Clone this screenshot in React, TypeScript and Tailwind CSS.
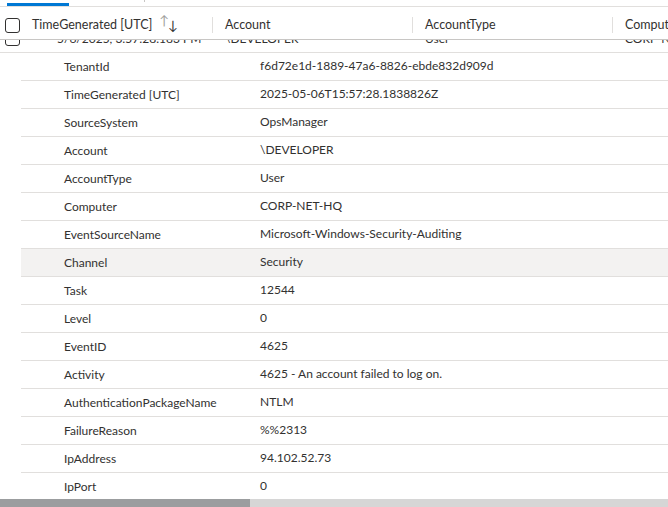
const details: [string, string][] = [
  ["TenantId", "f6d72e1d-1889-47a6-8826-ebde832d909d"],
  ["TimeGenerated [UTC]", "2025-05-06T15:57:28.1838826Z"],
  ["SourceSystem", "OpsManager"],
  ["Account", "\\DEVELOPER"],
  ["AccountType", "User"],
  ["Computer", "CORP-NET-HQ"],
  ["EventSourceName", "Microsoft-Windows-Security-Auditing"],
  ["Channel", "Security"],
  ["Task", "12544"],
  ["Level", "0"],
  ["EventID", "4625"],
  ["Activity", "4625 - An account failed to log on."],
  ["AuthenticationPackageName", "NTLM"],
  ["FailureReason", "%%2313"],
  ["IpAddress", "94.102.52.73"],
  ["IpPort", "0"],
];

function Checkbox() {
  return <div className="w-[15px] h-[15px] rounded-[3px] border border-[#323130] bg-white" />;
}

export default function App() {
  return (
    <div
      className="w-[668px] h-[507px] overflow-hidden bg-white text-[#323130] text-[12px] flex flex-col"
      style={{ fontFamily: 'Lato, "Open Sans", sans-serif' }}
    >
      {/* tab strip */}
      <div className="h-[7px] shrink-0 relative border-b border-[#e1dfdd]">
        <div className="absolute left-[7px] top-[3px] w-[62px] h-[3px] bg-[#0078d4]" />
        <div className="absolute left-[144px] top-0 w-px h-[2px] bg-[#c8c6c4]" />
      </div>

      <div className="flex-1 min-h-0 overflow-hidden flex flex-col">
        {/* header */}
        <div className="relative z-10 h-[33px] shrink-0 flex items-center pt-[4px] bg-white border-b border-[#c8c6c4] whitespace-nowrap text-[12.5px]">
          <div className="w-[25px] shrink-0 pl-[5px] flex items-center">
            <Checkbox />
          </div>
          <div className="w-[187px] shrink-0 pl-[7px] flex items-center">
            <span>TimeGenerated [UTC]</span>
            <span className="ml-[7px] flex items-start text-[13px] leading-none">
              <span className="text-[#a19f9d] -mt-[4px]">↑</span>
              <span className="text-[#323130] mt-[1px] -ml-[1px]">↓</span>
            </span>
          </div>
          <div className="w-px h-[16px] shrink-0 bg-[#e1dfdd]" />
          <div className="w-[199px] shrink-0 pl-[12px]">Account</div>
          <div className="w-px h-[16px] shrink-0 bg-[#e1dfdd]" />
          <div className="w-[199px] shrink-0 pl-[12px]">AccountType</div>
          <div className="w-px h-[16px] shrink-0 bg-[#e1dfdd]" />
          <div className="w-[120px] shrink-0 pl-[12px]">Computer</div>
        </div>

        {/* scrolled rows */}
        <div className="-mt-[15px] flex flex-col">
          <div className="h-[28px] shrink-0 flex items-center border-b border-[#e1dfdd] whitespace-nowrap">
            <div className="w-[25px] shrink-0 pl-[5px]">
              <Checkbox />
            </div>
            <div className="w-[188px] shrink-0 pl-[32px]">5/6/2025, 3:57:28.183 PM</div>
            <div className="w-[200px] shrink-0 pl-[12px]">\DEVELOPER</div>
            <div className="w-[200px] shrink-0 pl-[12px]">User</div>
            <div className="w-[120px] shrink-0 pl-[12px]">CORP-NET-HQ</div>
          </div>
          <div className="pl-[21px] flex flex-col">
            {details.map(([k, v]) => (
              <div
                key={k}
                className={`h-[28px] shrink-0 flex items-center border-b border-[#e1dfdd] whitespace-nowrap ${
                  k === "Channel" ? "bg-[#f3f2f1]" : ""
                }`}
              >
                <div className="w-[239px] shrink-0 pl-[43px]">{k}</div>
                <div className="flex-1 -mt-[2px]">{v}</div>
              </div>
            ))}
          </div>
        </div>
      </div>

      {/* horizontal scrollbar */}
      <div className="h-[8px] shrink-0 bg-[#d6d6d6] flex">
        <div className="w-[250px] h-full bg-[#9b9d9f]" />
      </div>
    </div>
  );
}
